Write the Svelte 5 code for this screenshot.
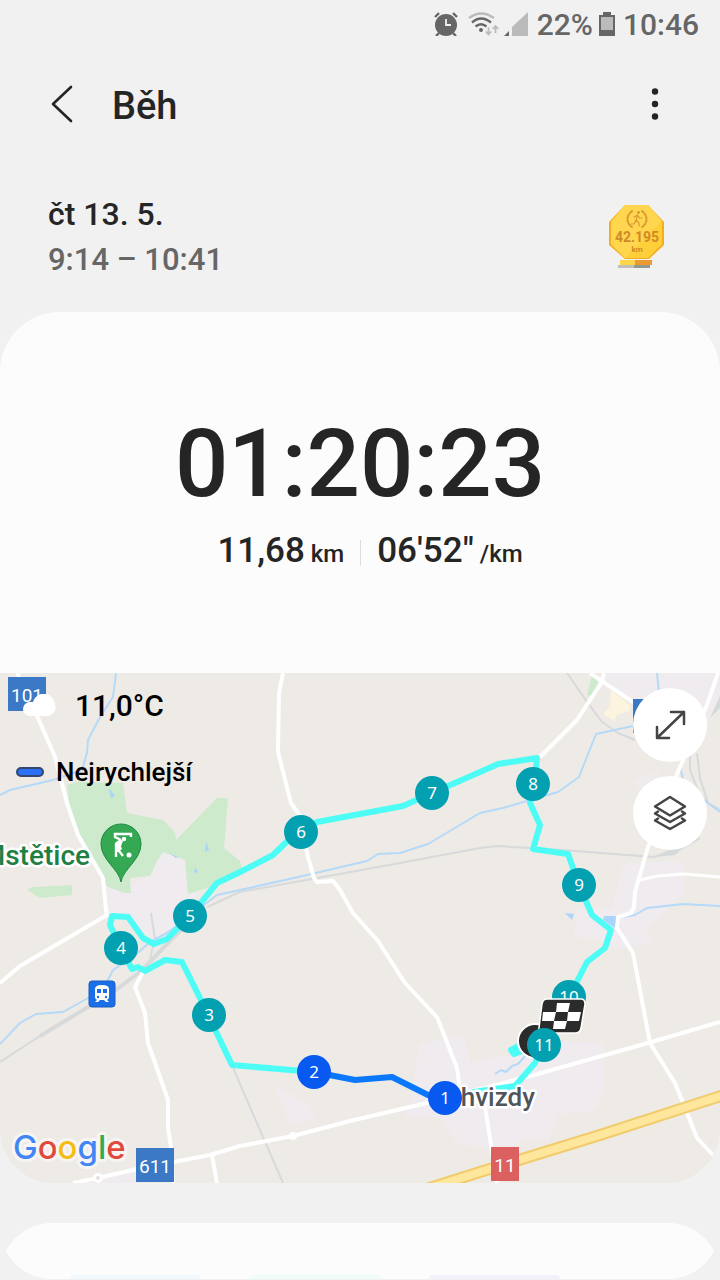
<script>
  const workout = {
    title: 'Běh',
    date: 'čt 13. 5.',
    range: '9:14 – 10:41',
    duration: '01:20:23',
    distance: '11,68',
    pace: '06\'52"'
  };

  // kilometre marks, drawn in this order so the later ones lie on top
  const marks = [
    { n: 8, x: 533, y: 111 },
    { n: 7, x: 432, y: 120 },
    { n: 6, x: 301, y: 159 },
    { n: 9, x: 579, y: 212 },
    { n: 5, x: 190, y: 243 },
    { n: 4, x: 121, y: 275 },
    { n: 10, x: 569, y: 324 },
    { n: 3, x: 209, y: 342 },
    { n: 2, x: 314, y: 399, fast: true },
    { n: 1, x: 445, y: 425, fast: true }
  ];

  const roads = [
    '17,0 38,45 55,84 67,130 78,162 103,205 106,237 107,242 20,293 0,310',
    '283,0 279,20 278,79 291,130 301,144 304,165 308,184 314,205 317,209 333,208 340,217 353,240 378,268 405,310 437,344 457,395 460,417 485,434 497,510',
    '540,84 577,47 602,9 604,0',
    '590,0 633,29 650,40',
    '718,0 707,32 680,94 648,174 635,219 634,234 631,240 618,244 617,255 633,280 650,370 675,410 697,465 713,482',
    '143,299 135,314 145,340 148,370 168,427 168,454 171,475 173,510'
  ];

  const streams = [
    '116,0 113,24 100,44 88,67 87,80 82,97 53,107 10,117 0,122',
    '0,371 20,350 36,341 63,339 90,324 108,307 113,297 133,284 150,269 167,260 217,222 240,217 307,202 367,188 378,181 400,180 428,171 480,140 503,135 558,119 579,104 596,61 633,53',
    '617,245 635,242 647,235 683,231 720,233',
    '657,0 659,20',
    '680,94 684,110 708,130 720,139',
    '495,401 501,397 506,399 512,393 518,391 526,382'
  ];

  const rails = [
    '40,363 0,389',
    '207,234 240,219 400,190 480,175 497,173 563,177 653,184 676,179 700,165',
    '567,0 585,26 602,49 618,60 635,67',
    '697,80 700,105 708,130 720,137',
    '690,80 690,97 699,120',
    '232,392 240,411 283,510',
    '151,240 155,266 150,285'
  ];
</script>

<main>
  <div class="status">
    <svg width="24" height="24" viewBox="0 0 24 24">
      <circle cx="12" cy="13" r="11" fill="#666" />
      <path d="M1 5l4-4M23 5l-4-4M5 21l-3 3M19 21l3 3" stroke="#666" stroke-width="2.4" />
      <path d="M12 7v6h5" fill="none" stroke="#f1f1f1" stroke-width="1.8" />
    </svg>
    <svg class="wifi" width="32" height="24" viewBox="0 0 32 24" fill="none">
      <path d="M1 6q12-9 25 0" stroke="#bbb" stroke-width="2.4" />
      <path d="M4 10.5q9-8 19 0M7.5 14.5q5.5-4.5 11 0" stroke="#666" stroke-width="2.4" />
      <circle cx="13" cy="18" r="2" fill="#666" />
      <path d="M20.5 15.5v7M17.8 19.5l2.7 3 2.7-3M27.5 21v-7M24.8 17l2.7-3 2.7 3" stroke="#bbb" stroke-width="1.8" />
    </svg>
    <svg class="signal" width="24" height="24" viewBox="0 0 24 24">
      <path d="M0 24h5v-5z" fill="#666" />
      <path d="M8 24v-9L24 0v24z" fill="#bbb" />
    </svg>
    <span>22%</span>
    <svg class="battery" width="16" height="24" viewBox="0 0 16 24">
      <path d="M4 0h8v3h4v21H0V3h4z" fill="#666" />
      <path d="M2 5h12v13H2z" fill="#bbb" />
    </svg>
    <span>10:46</span>
  </div>

  <header>
    <button class="icon-btn" aria-label="Zpět">
      <svg width="24" height="40" viewBox="0 0 24 40" fill="none">
        <path d="M21 3L3 20l18 17" stroke="#252525" stroke-width="2.6" stroke-linecap="round" stroke-linejoin="round" />
      </svg>
    </button>
    <h1>{workout.title}</h1>
    <button class="icon-btn" aria-label="Další možnosti">
      <svg width="10" height="40" viewBox="0 0 10 40" fill="#252525">
        <circle cx="5" cy="7.5" r="3.2" />
        <circle cx="5" cy="20" r="3.2" />
        <circle cx="5" cy="32.5" r="3.2" />
      </svg>
    </button>
  </header>

  <section class="when">
    <div>
      <p class="date">{workout.date}</p>
      <p class="range">{workout.range}</p>
    </div>
    <svg width="60" height="66" viewBox="0 0 60 66">
      <path d="M13 56h28v5H13z" fill="#ffd54a" />
      <path d="M28 56h17v5H28z" fill="#ec9a33" />
      <path d="M11 61h17v3H11z" fill="#c0c0b8" />
      <path d="M27 61h16v3H27z" fill="#93988f" />
      <path d="M18 1h23l16 17v23L42 55H18L2 41V18z" fill="#f5ae1b" />
      <path d="M18 1h23l14 17v22L41 54H18L4 40V18z" fill="#ffcf3a" />
      <path d="M18 1h23l14 16L18 54 4 40V18z" fill="#ffd956" opacity="0.7" />
      <g fill="none" stroke="#d89a35" stroke-linecap="round">
        <path d="M25 7q-6 5-4 11 1 3 4 5M35 7q6 5 4 11-1 3-4 5" stroke-width="2" stroke-dasharray="2 1.5" />
        <path d="M30.5 11l-1.5 5 3 3v3M29 16l-2 4h-3M27 13l3.5-2 2 3h2.5" stroke-width="1.2" />
      </g>
      <circle cx="31.5" cy="8.5" r="1.3" fill="#d08a28" />
      <text x="30" y="38" class="medal">42.195</text>
      <text x="30" y="48" class="medal km">km</text>
    </svg>
  </section>

  <section class="summary">
    <p class="duration">{workout.duration}</p>
    <div class="figures">
      <p>{workout.distance}<small>km</small></p>
      <span class="divider"></span>
      <p>{workout.pace}<small>/km</small></p>
    </div>
  </section>

  <section class="map">
    <svg class="canvas" viewBox="0 0 720 510" preserveAspectRatio="xMidYMid slice">
      <rect width="720" height="510" fill="#eeebe6" />

      <g fill="#efebee">
        <path d="M106 212h25l18-9 8-15 7-10 21 8 4 29 16-5-25 40-25 18-25-18-23-10z" />
        <path d="M600 0h120v35l-30 35-50-30z" />
        <path d="M634 107l25-8v18l-16 5z" />
        <path d="M622 195l10-6h52v32l-36 35 4 14-34 6-22-10-22-2 3-28 35-2z" />
        <path d="M419 371l44-10 8 30 15-6 42-4 24-12h52v46l-8 22-38 5-10 25h-24l-20 8-46-3-18-26-37-4 8-14z" />
        <path d="M275 412l33 18 8 14-26 10z" />
        <path d="M90 510l20-12h28v12z" />
      </g>

      <g fill="#cdeacd">
        <path d="M67 112l10-3 46 1 4 30 36 7 12 12 1 8 41-42h11l-4 50 16 13 3 11-26 13-29 9-3-34-22-8-6 9-7 15-20 2 1 15h-6l-19-7-6-15-17-27-14-40z" />
        <path d="M27 217l6-3 39-2v10l-32 3z" />
        <path d="M592 2l6 7-7 14-4-1z" />
      </g>
      <path d="M611 17l20 16-2 5-12 4-3 6-11-7 7-8z" fill="#fdf4df" />
      <path d="M109 115l6 8-4 2zM206 169l3 8-4 2zM195 194l3 5-4 1zM169 180l9 4-2 1zM565 240l9 1-2 6zM604 243h14l-3 12-12-8z" fill="#a9d5fb" />

      {#each rails as points}
        <polyline class="rail" {points} />
      {/each}
      <polyline class="rail wide" points="40,363 113,319 140,299 173,265 190,248" />
      <path d="M653 184l30-13 16-12-24 23zM710 45l10-22v12z" fill="#d5d9da" />
      {#each streams as points}
        <polyline class="stream" {points} />
      {/each}

      {#each roads as points}
        <polyline class="road" {points} />
      {/each}
      <polyline class="road thin" points="640,207 657,203 683,201 720,204" />
      <polyline class="road" points="212,482 217,510" />
      <polyline class="road" points="73,510 98,505 137,496 210,482 240,473 293,463 350,448 427,430 527,404 648,370 720,349" />
      <circle cx="98" cy="505" r="5" fill="#fff" />
      <circle cx="98" cy="505" r="2" fill="#e4e2de" />
      <circle cx="293" cy="463" r="4" fill="#fff" />

      <polyline points="420,518 480,499 600,462 730,420" fill="none" stroke="#f2cb6c" stroke-width="12" />
      <polyline points="420,518 480,499 600,462 730,420" fill="none" stroke="#fee69c" stroke-width="8" />

      <g class="shield">
        <rect x="8" y="4" width="38" height="34" />
        <text x="27" y="29">101</text>
        <rect x="136" y="475" width="38" height="34" />
        <text x="155" y="500">611</text>
        <rect x="633" y="26" width="38" height="34" />
        <rect class="red" x="491" y="474" width="28" height="34" />
        <text x="505" y="499">11</text>
      </g>

      <path d="M121 209c-2-13-20-22-20-38a20 20 0 0 1 40 0c0 16-18 25-20 38z" fill="#34a853" stroke="#1e8a45" />
      <path d="M131 164v-3h-16v3l6 3M116 184v-10l7 9" fill="none" stroke="#fff" stroke-width="2.4" />
      <path d="M115 170l5-4 3 2-2 5 1 3-4 3-3-1z" fill="#fff" />
      <circle cx="124" cy="166" r="2.2" fill="#fff" />
      <circle cx="129" cy="182" r="2.5" fill="#fff" />

      <rect x="89" y="308" width="26" height="26" rx="3" fill="#1a6fe8" stroke="#1c5cc0" />
      <path d="M95 316q0-4 7-4t7 4v8q0 2-2 3l2 2h-3l-2-2h-4l-2 2h-3l2-2q-2-1-2-3z" fill="#fff" />
      <path d="M97 316h4v4h-4zM103 316h4v4h-4z" fill="#1a6fe8" />
      <circle cx="98" cy="324" r="1.2" fill="#1a6fe8" />
      <circle cx="106" cy="324" r="1.2" fill="#1a6fe8" />

      <g class="route">
        <polyline points="314,399 232,392 200,325 182,289 165,287 145,298 138,294 132,296 121,275 110,252 112,243 128,244 143,265 154,271 167,266 190,243 217,210 240,199 273,182 301,155 317,149 403,133 432,120 480,99 498,91 537,85 536,95 530,130 540,152 533,176 568,181 579,212 592,242 611,257 605,275 587,289 569,324" />
        <polyline points="544,372 535,390 515,413 480,418 445,425" />
        <polyline points="528,368 511,377 514,381 528,376" />
        <polyline class="fast" points="314,399 355,407 392,404 428,422 445,425" />
      </g>

      <text x="90" y="192" class="place green">Mstětice</text>
      <text x="535" y="433" class="place">hvizdy</text>

      {#each marks as mark}
        <g class="mark" class:fast={mark.fast}>
          <circle cx={mark.x} cy={mark.y} r="17" />
          <text x={mark.x} y={mark.y + 6}>{mark.n}</text>
        </g>
      {/each}

      <!-- start, finish and the last full kilometre -->
      <circle cx="535" cy="368" r="17" fill="#2b2b2b" stroke="#fff" stroke-width="2" />
      <path d="M547 326h34q4 0 4 5l-4 24q-1 5-5 5h-34q-4 0-3-5l3-24q1-5 5-5z" fill="#2b2b2b" stroke="#fff" stroke-width="1.5" />
      <path d="M557 330h13l-2 9h-12zM543 339h13l-2 9h-12zM568 339h13l-2 9h-12zM554 348h13l-2 8h-12z" fill="#fff" />
      <g class="mark">
        <circle cx="544" cy="372" r="17" />
        <text x="544" y="378">11</text>
      </g>

      <text x="13" y="486" class="google"><tspan fill="#4285f4">G</tspan><tspan fill="#e04a3c">o</tspan><tspan fill="#f6bc16">o</tspan><tspan fill="#4285f4">g</tspan><tspan fill="#34a853">l</tspan><tspan fill="#e04a3c">e</tspan></text>
    </svg>

    <div class="info">
      <div class="row">
        <svg class="cloud" width="34" height="22" viewBox="0 0 34 22">
          <path d="M8 22a7 7 0 0 1 0-14h3a11 11 0 0 1 21-1q4 9-2 13-2 2-5 2z" fill="#fff" />
        </svg>
        <span class="temp">11,0°C</span>
      </div>
      <div class="row">
        <span class="swatch"></span>
        <span class="legend">Nejrychlejší</span>
      </div>
    </div>

    <div class="tools">
      <button aria-label="Zvětšit mapu">
        <svg width="36" height="36" viewBox="0 0 36 36">
          <path d="M5 31L32 5M19 5h13v12M5 20v11h12" />
        </svg>
      </button>
      <button aria-label="Vrstvy mapy">
        <svg width="36" height="36" viewBox="0 0 36 36">
          <path d="M18 2l15 9.5L18 20.5 3 11.5zM6 16.5l-3 2L18 27l15-8.5-3-2M6 23.5l-3 2L18 34l15-8.5-3-2" />
        </svg>
      </button>
    </div>
  </section>

  <section class="next">
    <div class="half top"></div>
    <div class="half bottom">
      <i class="blue"></i>
      <i class="mint"></i>
      <i class="violet"></i>
    </div>
  </section>
</main>

<style>
  :global(body) {
    background: #f1f1f1;
  }
  main {
    font-family: Roboto, 'Noto Sans', sans-serif;
    font-weight: 500;
    color: #252525;
    overflow: hidden;
  }
  p, h1 {
    margin: 0;
    font-weight: 500;
  }
  button {
    border: 0;
    padding: 0;
    background: none;
    cursor: pointer;
  }
  svg {
    display: block;
  }
  .status {
    display: flex;
    justify-content: flex-end;
    align-items: center;
    height: 48px;
    padding-right: 21px;
    font-size: 30px;
    color: #666;
  }
  .wifi {
    margin-left: 10px;
  }
  .signal {
    margin: 0 9px 0 4px;
  }
  .battery {
    margin: 0 8px 0 6px;
  }
  header {
    display: flex;
    align-items: center;
    height: 112px;
    padding: 0 60px 0 50px;
  }
  h1 {
    flex: 1;
    margin-left: 38px;
    padding-top: 4px;
    font-size: 38px;
    line-height: 44px;
  }
  .when {
    display: flex;
    justify-content: space-between;
    align-items: center;
    padding: 32px 53px 30px 48px;
  }
  .date, .range {
    font-size: 32px;
    line-height: 45px;
  }
  .range {
    font-size: 31px;
    color: #666;
  }
  .medal {
    font-size: 14px;
    font-weight: 700;
    text-anchor: middle;
    fill: #d08a28;
  }
  .medal.km {
    font-size: 8px;
  }
  .summary {
    padding: 95px 0;
    border-radius: 60px 60px 0 0;
    background: #fcfcfc;
    text-align: center;
  }
  .duration {
    font-size: 94px;
    line-height: 114px;
  }
  .figures {
    display: flex;
    justify-content: center;
    align-items: center;
    margin-left: 20px;
    padding-top: 6px;
    font-size: 35px;
    line-height: 48px;
  }
  .figures p {
    display: flex;
    align-items: baseline;
    gap: 6px;
  }
  .figures small {
    font-size: 24px;
  }
  .divider {
    width: 1px;
    height: 26px;
    margin: 0 16px;
    background: #ddd;
  }
  .map {
    position: relative;
    height: 510px;
    border-radius: 0 0 54px 54px;
    overflow: hidden;
  }
  .canvas {
    width: 100%;
    height: 100%;
  }
  .rail, .stream, .road, .route polyline {
    fill: none;
    stroke-linejoin: round;
  }
  .rail {
    stroke: #d7d9db;
    stroke-width: 2;
  }
  .rail.wide {
    stroke-width: 4;
  }
  .stream {
    stroke: #b5d9f8;
    stroke-width: 2;
  }
  .road {
    stroke: #fff;
    stroke-width: 4;
  }
  .road.thin {
    stroke-width: 3;
  }
  .route polyline {
    stroke: #4dfdf5;
    stroke-width: 6;
  }
  .route .fast {
    stroke: #0a78fa;
  }
  .shield rect {
    fill: #3b78c6;
  }
  .shield .red {
    fill: #dc6060;
  }
  .shield text {
    fill: #fff;
    font-size: 19px;
    font-weight: 400;
    text-anchor: middle;
  }
  .place {
    font-size: 26px;
    text-anchor: end;
    fill: #50555b;
    stroke: #fff;
    stroke-width: 5px;
    stroke-linejoin: round;
    paint-order: stroke;
  }
  .place.green {
    font-size: 28px;
    fill: #1f8044;
  }
  .mark circle {
    fill: #03a0b1;
  }
  .mark.fast circle {
    fill: #0759ef;
  }
  .mark text {
    fill: #fff;
    font-family: 'Noto Sans', sans-serif;
    font-size: 17px;
    font-weight: 400;
    text-anchor: middle;
  }
  .google {
    font-family: Inter, sans-serif;
    font-size: 33px;
    font-weight: 500;
    stroke: #f7f5f3;
    stroke-width: 6px;
    stroke-linejoin: round;
    paint-order: stroke;
  }
  .info {
    position: absolute;
    top: 14px;
    left: 16px;
    color: #000;
  }
  .row {
    display: flex;
    align-items: center;
    height: 36px;
  }
  .row + .row {
    margin-top: 31px;
  }
  .cloud {
    margin: 0 19px 0 6px;
  }
  .temp {
    font-size: 30px;
  }
  .swatch {
    box-sizing: border-box;
    width: 28px;
    height: 10px;
    margin-right: 12px;
    border: 2px solid #34466b;
    border-radius: 5px;
    background: #2a71f5;
  }
  .legend {
    font-size: 26px;
  }
  .tools {
    position: absolute;
    top: 15px;
    right: 13px;
    display: flex;
    flex-direction: column;
    gap: 14px;
  }
  .tools button {
    display: flex;
    align-items: center;
    justify-content: center;
    width: 74px;
    height: 74px;
    border-radius: 50%;
    background: #fff;
  }
  .tools path {
    fill: none;
    stroke: #444;
    stroke-width: 2.5;
    stroke-linecap: round;
    stroke-linejoin: round;
  }
  .next {
    margin-top: 40px;
  }
  .half {
    position: relative;
    display: flex;
    height: 28px;
    overflow: hidden;
  }
  .half::before {
    content: '';
    position: absolute;
    left: 0;
    right: 0;
    height: 52px;
    background: #fcfcfc;
  }
  .top::before {
    top: 0;
    border-radius: 52px 52px 0 0;
  }
  .bottom::before {
    bottom: 0;
    border-radius: 0 0 52px 52px;
  }
  .bottom {
    align-items: flex-end;
    gap: 48px;
    padding: 0 160px 0 70px;
  }
  .bottom i {
    position: relative;
    flex: 1;
    height: 4px;
    border-radius: 20px 20px 0 0;
  }
  .blue {
    background: #f2f9fd;
  }
  .mint {
    background: #effdf8;
  }
  .violet {
    background: #f3f0fb;
  }
</style>
